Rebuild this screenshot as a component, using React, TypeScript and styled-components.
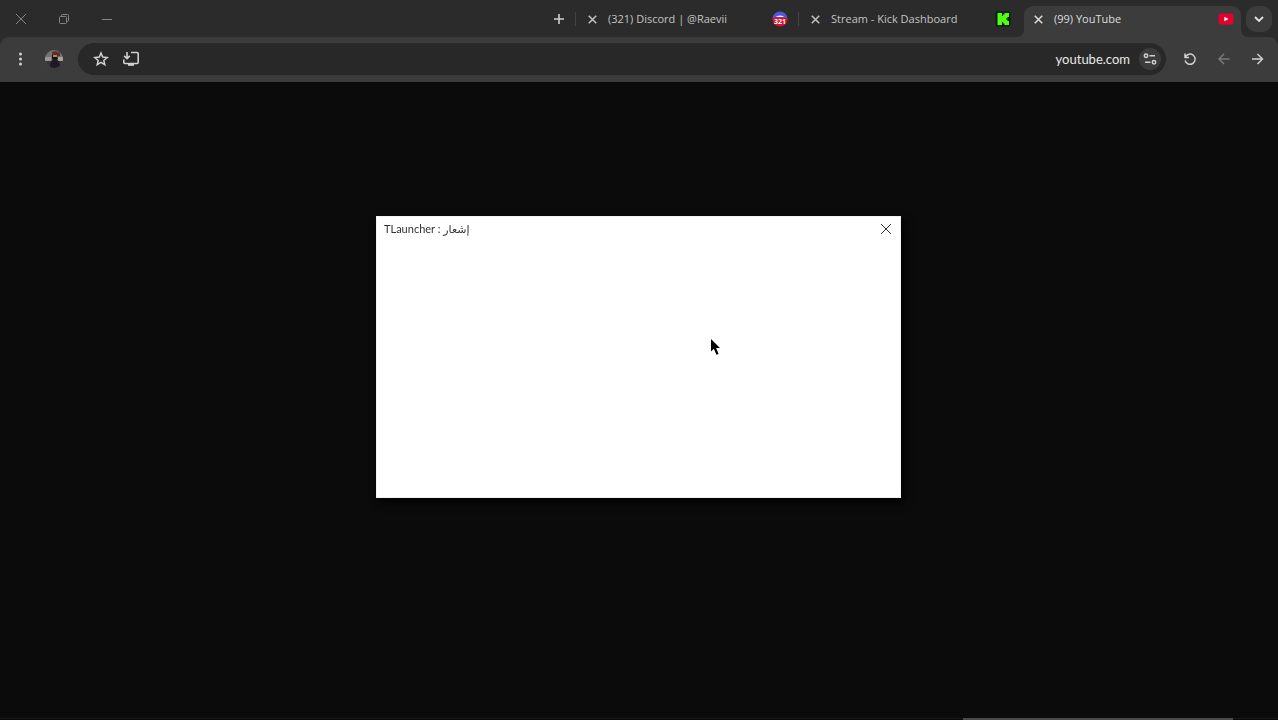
import React from 'react';
import styled, { createGlobalStyle } from 'styled-components';

const GlobalStyle = createGlobalStyle`
  *, *::before, *::after { box-sizing: border-box; }
  body {
    margin: 0;
    background: #0b0b0b;
    font-family: Lato, "Noto Sans", "DejaVu Sans", sans-serif;
  }
`;

const Window = styled.div`
  display: flex;
  flex-direction: column;
  min-height: 100vh;
  background: #2b2b2b;
  overflow: hidden;
`;

const TabStrip = styled.header`
  display: flex;
  align-items: center;
  height: 37px;
  padding-right: 6px;
`;

const WindowControls = styled.div`
  display: flex;
  gap: 1px;
  flex: 1;
`;

const Button = styled.button<{ $width?: number; $height?: number; $bg?: string; $color?: string; $radius?: number }>`
  display: flex;
  align-items: center;
  justify-content: center;
  flex: none;
  width: ${(p) => p.$width ?? 28}px;
  height: ${(p) => p.$height ?? 28}px;
  padding: 0;
  border: 0;
  border-radius: ${(p) => p.$radius ?? 14}px;
  background: ${(p) => p.$bg ?? 'transparent'};
  color: ${(p) => p.$color ?? '#d0d0d0'};
`;

const Tabs = styled.nav`
  display: flex;
  align-self: stretch;
  margin: 0 2px;
`;

const Tab = styled.div<{ $active?: boolean }>`
  position: relative;
  display: flex;
  align-items: center;
  width: 223px;
  padding: 1px 10px 0 8px;
  color: ${(p) => (p.$active ? '#dedede' : '#c4c4c4')};

  &::before {
    content: "";
    position: absolute;
    ${(p) =>
      p.$active
        ? 'inset: 6px 3px 0; border-radius: 9px 9px 0 0; background: #3c3c3c;'
        : 'left: 0; top: 12px; width: 1px; height: 14px; background: #444;'}
  }

  & > * { position: relative; }
`;

const Flare = styled.svg`
  && { position: absolute; }
  left: -5px;
  bottom: 0;
`;

const TabTitle = styled.a`
  flex: 1;
  margin-left: 7px;
  font: 11px/18px "Open Sans", "Noto Sans", sans-serif;
  color: inherit;
  text-decoration: none;
  white-space: nowrap;
`;

const Toolbar = styled.div`
  display: flex;
  align-items: center;
  gap: 10px;
  height: 45px;
  padding: 0 6px 2px;
  border-radius: 9px 9px 0 0;
  background: #3c3c3c;
`;

const ButtonGroup = styled.div`
  display: flex;
  gap: 6px;
`;

const Omnibox = styled.div`
  display: flex;
  align-items: center;
  flex: 1;
  height: 32px;
  padding: 0 5px 0 8px;
  border-radius: 16px;
  background: #282828;
`;

const Address = styled.input`
  flex: 1;
  min-width: 0;
  height: 24px;
  margin-right: 9px;
  padding: 0;
  border: 0;
  outline: 0;
  background: transparent;
  color: #e8e8e8;
  font: 13px Lato, "Noto Sans", sans-serif;
  text-align: right;
`;

const Page = styled.main`
  flex: 1;
  background: #0b0b0b;
`;

const Taskbar = styled.footer`
  display: flex;
  height: 2px;
  padding-right: 45px;
  justify-content: flex-end;
  border-top: 1px solid #1b1718;
  background: #0b0b0b;
`;

const TaskbarField = styled.div`
  width: 270px;
  height: 2px;
  margin-top: -1px;
  background: #4a4a4a;
`;

const Overlay = styled.div`
  position: fixed;
  inset: 0;
  display: grid;
  place-items: center;
  padding: 0 1px 6px 0;
`;

const Dialog = styled.section`
  width: 525px;
  max-width: 100%;
  min-height: 282px;
  border: 1px solid #f2f2f2;
  background: #fff;
  box-shadow: 3px 4px 8px #000;
`;

const DialogBar = styled.header`
  display: flex;
  align-items: center;
  justify-content: space-between;
  height: 24px;
  padding-left: 7px;
`;

const DialogTitle = styled.h1`
  margin: 0;
  font-size: 11px;
  line-height: 16px;
  font-weight: 400;
  color: #333;
`;

const Pointer = styled.svg`
  position: fixed;
  left: 710px;
  top: 337px;
`;

const Cross = ({ size, width = 1 }: { size: number; width?: number }) => (
  <svg width={size} height={size} viewBox="0 0 12 12" fill="none" stroke="currentColor" strokeWidth={width}>
    <path d="M1 1 11 11M11 1 1 11" />
  </svg>
);

const RestoreIcon = () => (
  <svg width="12" height="12" viewBox="0 0 12 12" fill="none" stroke="currentColor">
    <rect x="1.5" y="3.5" width="7" height="7" rx="1" />
    <path d="M3.5 3.5V2.5a1 1 0 0 1 1-1h5a1 1 0 0 1 1 1v5a1 1 0 0 1-1 1h-1" />
  </svg>
);

const MinimizeIcon = () => (
  <svg width="12" height="12" viewBox="0 0 12 12" stroke="currentColor">
    <path d="M1 6.5h10" />
  </svg>
);

const PlusIcon = () => (
  <svg width="12" height="12" viewBox="0 0 12 12" stroke="currentColor" strokeWidth="1.6">
    <path d="M6 1v10M1 6h10" />
  </svg>
);

const ChevronIcon = () => (
  <svg width="12" height="12" viewBox="0 0 12 12" fill="none" stroke="currentColor" strokeWidth="1.8">
    <path d="m2 4 4 4 4-4" />
  </svg>
);

const DiscordIcon = () => (
  <svg width="16" height="16" viewBox="0 0 16 16">
    <path d="M.4 8a7.6 7.6 0 0 1 15.200 0z" fill="#4e5bd8" />
    <path d="M4.500 5.200Q8 3.600 11.500 5.200V6h-7z" fill="#e8e9ff" />
    <path d="M.4 8q0-1.500 1.500-1.500h12.200q1.500 0 1.500 1.500a7.600 7.600 0 0 1-15.200 0z" fill="#dc0f2a" />
    <text x="8" y="13" textAnchor="middle" fontSize="7" fontWeight="700" fill="#fff" fontFamily="Open Sans, sans-serif">321</text>
  </svg>
);

const KickIcon = () => (
  <svg width="16" height="16" viewBox="0 0 16 16">
    <rect x=".5" y=".5" width="15" height="15" rx="2" fill="#06230a" />
    <path d="M2.500 2h4.500v3h1V3.500h1.500V2H14v4h-1.500v1.500H11v1h1.500V10H14v4H9.500v-1.500H8V11H7v3H2.500z" fill="#53fc18" />
  </svg>
);

const YouTubeIcon = () => (
  <svg width="16" height="16" viewBox="0 0 16 16">
    <rect x="0.5" y="2.500" width="15" height="11" rx="3" fill="#e6002d" />
    <path d="m6.300 5.700 4.200 2.300-4.200 2.300z" fill="#fff" />
  </svg>
);

const KebabIcon = () => (
  <svg width="16" height="16" viewBox="0 0 16 16" fill="currentColor">
    <circle cx="8.500" cy="3" r="1.500" />
    <circle cx="8.500" cy="8" r="1.500" />
    <circle cx="8.500" cy="13" r="1.500" />
  </svg>
);

const Avatar = () => (
  <svg width="18" height="18" viewBox="0 0 18 18">
    <clipPath id="avatar"><circle cx="9" cy="9" r="9" /></clipPath>
    <g clipPath="url(#avatar)">
      <rect width="18" height="18" fill="#77736c" />
      <path d="M0 7h6v4H0z" fill="#9b9890" />
      <path d="M12 7h6v4h-6z" fill="#aaa59c" />
      <path d="M0 11h18v7H0z" fill="#39353a" />
      <path d="M7 2q4-2 8 1v3l-5 1-3-1z" fill="#5d2f28" />
      <path d="M7 5h5l1 4-3 2-3-2z" fill="#171315" />
      <path d="M8 5h4v2H8z" fill="#b0846c" />
      <path d="M5 18q0-9 5-9t5 9z" fill="#1f1826" />
    </g>
  </svg>
);

const StarIcon = () => (
  <svg width="16" height="16" viewBox="0 0 16 16" fill="none" stroke="currentColor" strokeWidth="1.500">
    <path d="m8 2 1.700 4.100 4.500.4-3.400 2.900 1 4.300L8 11.400l-3.800 2.300 1-4.300L1.800 6.500l4.500-.4z" />
  </svg>
);

const InstallIcon = () => (
  <svg width="18" height="18" viewBox="0 0 18 18" fill="none" stroke="currentColor" strokeWidth="1.600">
    <path d="M9 2.500h6q1.200 0 1.200 1.200v8.600q0 1.200-1.200 1.200H3q-1.200 0-1.200-1.200V9.500" />
    <path d="M5 2v6.500M2.200 5.900 5 8.700l2.800-2.800" />
    <path d="M6 14.700h6" strokeWidth="2.200" />
  </svg>
);

const TuneIcon = () => (
  <svg width="14" height="14" viewBox="0 0 14 14" fill="none" stroke="currentColor" strokeWidth="1.500">
    <circle cx="3" cy="3.800" r="1.700" />
    <path d="M6.500 3.800H12M2 10.200h5.500" />
    <circle cx="11" cy="10.200" r="1.700" />
  </svg>
);

const ReloadIcon = () => (
  <svg width="16" height="16" viewBox="0 0 16 16" fill="none" stroke="currentColor" strokeWidth="1.500">
    <path d="M3 2.500v4h4M3.300 6.300A5.100 5.100 0 1 1 3.100 9.500" />
  </svg>
);

const ArrowIcon = ({ back }: { back?: boolean }) => (
  <svg width="16" height="16" viewBox="0 0 16 16" fill="none" stroke="currentColor" strokeWidth="1.500">
    <path d={back ? 'M13.500 8H3M8 3 3 8l5 5' : 'M2 8H12.500M7.500 3l5 5-5 5'} />
  </svg>
);

const tabs = [
  { title: '(321) Discord | @Raevii', icon: <DiscordIcon /> },
  { title: 'Stream - Kick Dashboard', icon: <KickIcon /> },
  { title: '(99) YouTube', icon: <YouTubeIcon />, active: true },
];

export default function App() {
  return (
    <>
      <GlobalStyle />
      <Window>
        <TabStrip>
          <WindowControls>
            <Button $width={42} $radius={0} $color="#858585" aria-label="Close window"><Cross size={12} /></Button>
            <Button $width={42} $radius={0} $color="#858585" aria-label="Restore window"><RestoreIcon /></Button>
            <Button $width={42} $radius={0} $color="#858585" aria-label="Minimize window"><MinimizeIcon /></Button>
          </WindowControls>
          <Button aria-label="New tab"><PlusIcon /></Button>
          <Tabs aria-label="Tabs">
            {tabs.map((tab) => (
              <Tab key={tab.title} $active={tab.active}>
                {tab.active && (
                  <Flare width="233" height="8" viewBox="0 0 233 8" fill="#3c3c3c">
                    <path d="M0 8q8 0 8-8v8zM233 8q-8 0-8-8v8z" />
                  </Flare>
                )}
                <Button $width={18} $height={18} $color="inherit" aria-label={`Close ${tab.title}`}>
                  <Cross size={9} width={2} />
                </Button>
                <TabTitle href="#">{tab.title}</TabTitle>
                {tab.icon}
              </Tab>
            ))}
          </Tabs>
          <Button $width={26} $height={26} $bg="#3c3c3c" $radius={10} $color="#e4e4e4" aria-label="Search tabs">
            <ChevronIcon />
          </Button>
        </TabStrip>
        <Toolbar>
          <ButtonGroup>
            <Button aria-label="Menu"><KebabIcon /></Button>
            <Button aria-label="Profile"><Avatar /></Button>
          </ButtonGroup>
          <Omnibox>
            <Button $width={30} aria-label="Bookmark this tab"><StarIcon /></Button>
            <Button $width={30} aria-label="Install app"><InstallIcon /></Button>
            <Address aria-label="Address" defaultValue="youtube.com" />
            <Button $width={22} $height={22} $bg="#3c3c3c" aria-label="Site information"><TuneIcon /></Button>
          </Omnibox>
          <ButtonGroup>
            <Button aria-label="Reload"><ReloadIcon /></Button>
            <Button $color="#777" aria-label="Forward"><ArrowIcon back /></Button>
            <Button aria-label="Back"><ArrowIcon /></Button>
          </ButtonGroup>
        </Toolbar>
        <Page />
        <Taskbar><TaskbarField /></Taskbar>
      </Window>
      <Overlay>
        <Dialog role="dialog" aria-labelledby="dialog-title">
          <DialogBar>
            <DialogTitle id="dialog-title">TLauncher : إشعار</DialogTitle>
            <Button $color="#333" aria-label="Close dialog"><Cross size={12} /></Button>
          </DialogBar>
        </Dialog>
      </Overlay>
      <Pointer width="12" height="20" viewBox="0 0 12 20" aria-hidden="true">
        <path d="M1 2v12.500l2.900-2.700 2.500 6 2.200-.9-2.500-5.900H10z" fill="#000" />
      </Pointer>
    </>
  );
}
